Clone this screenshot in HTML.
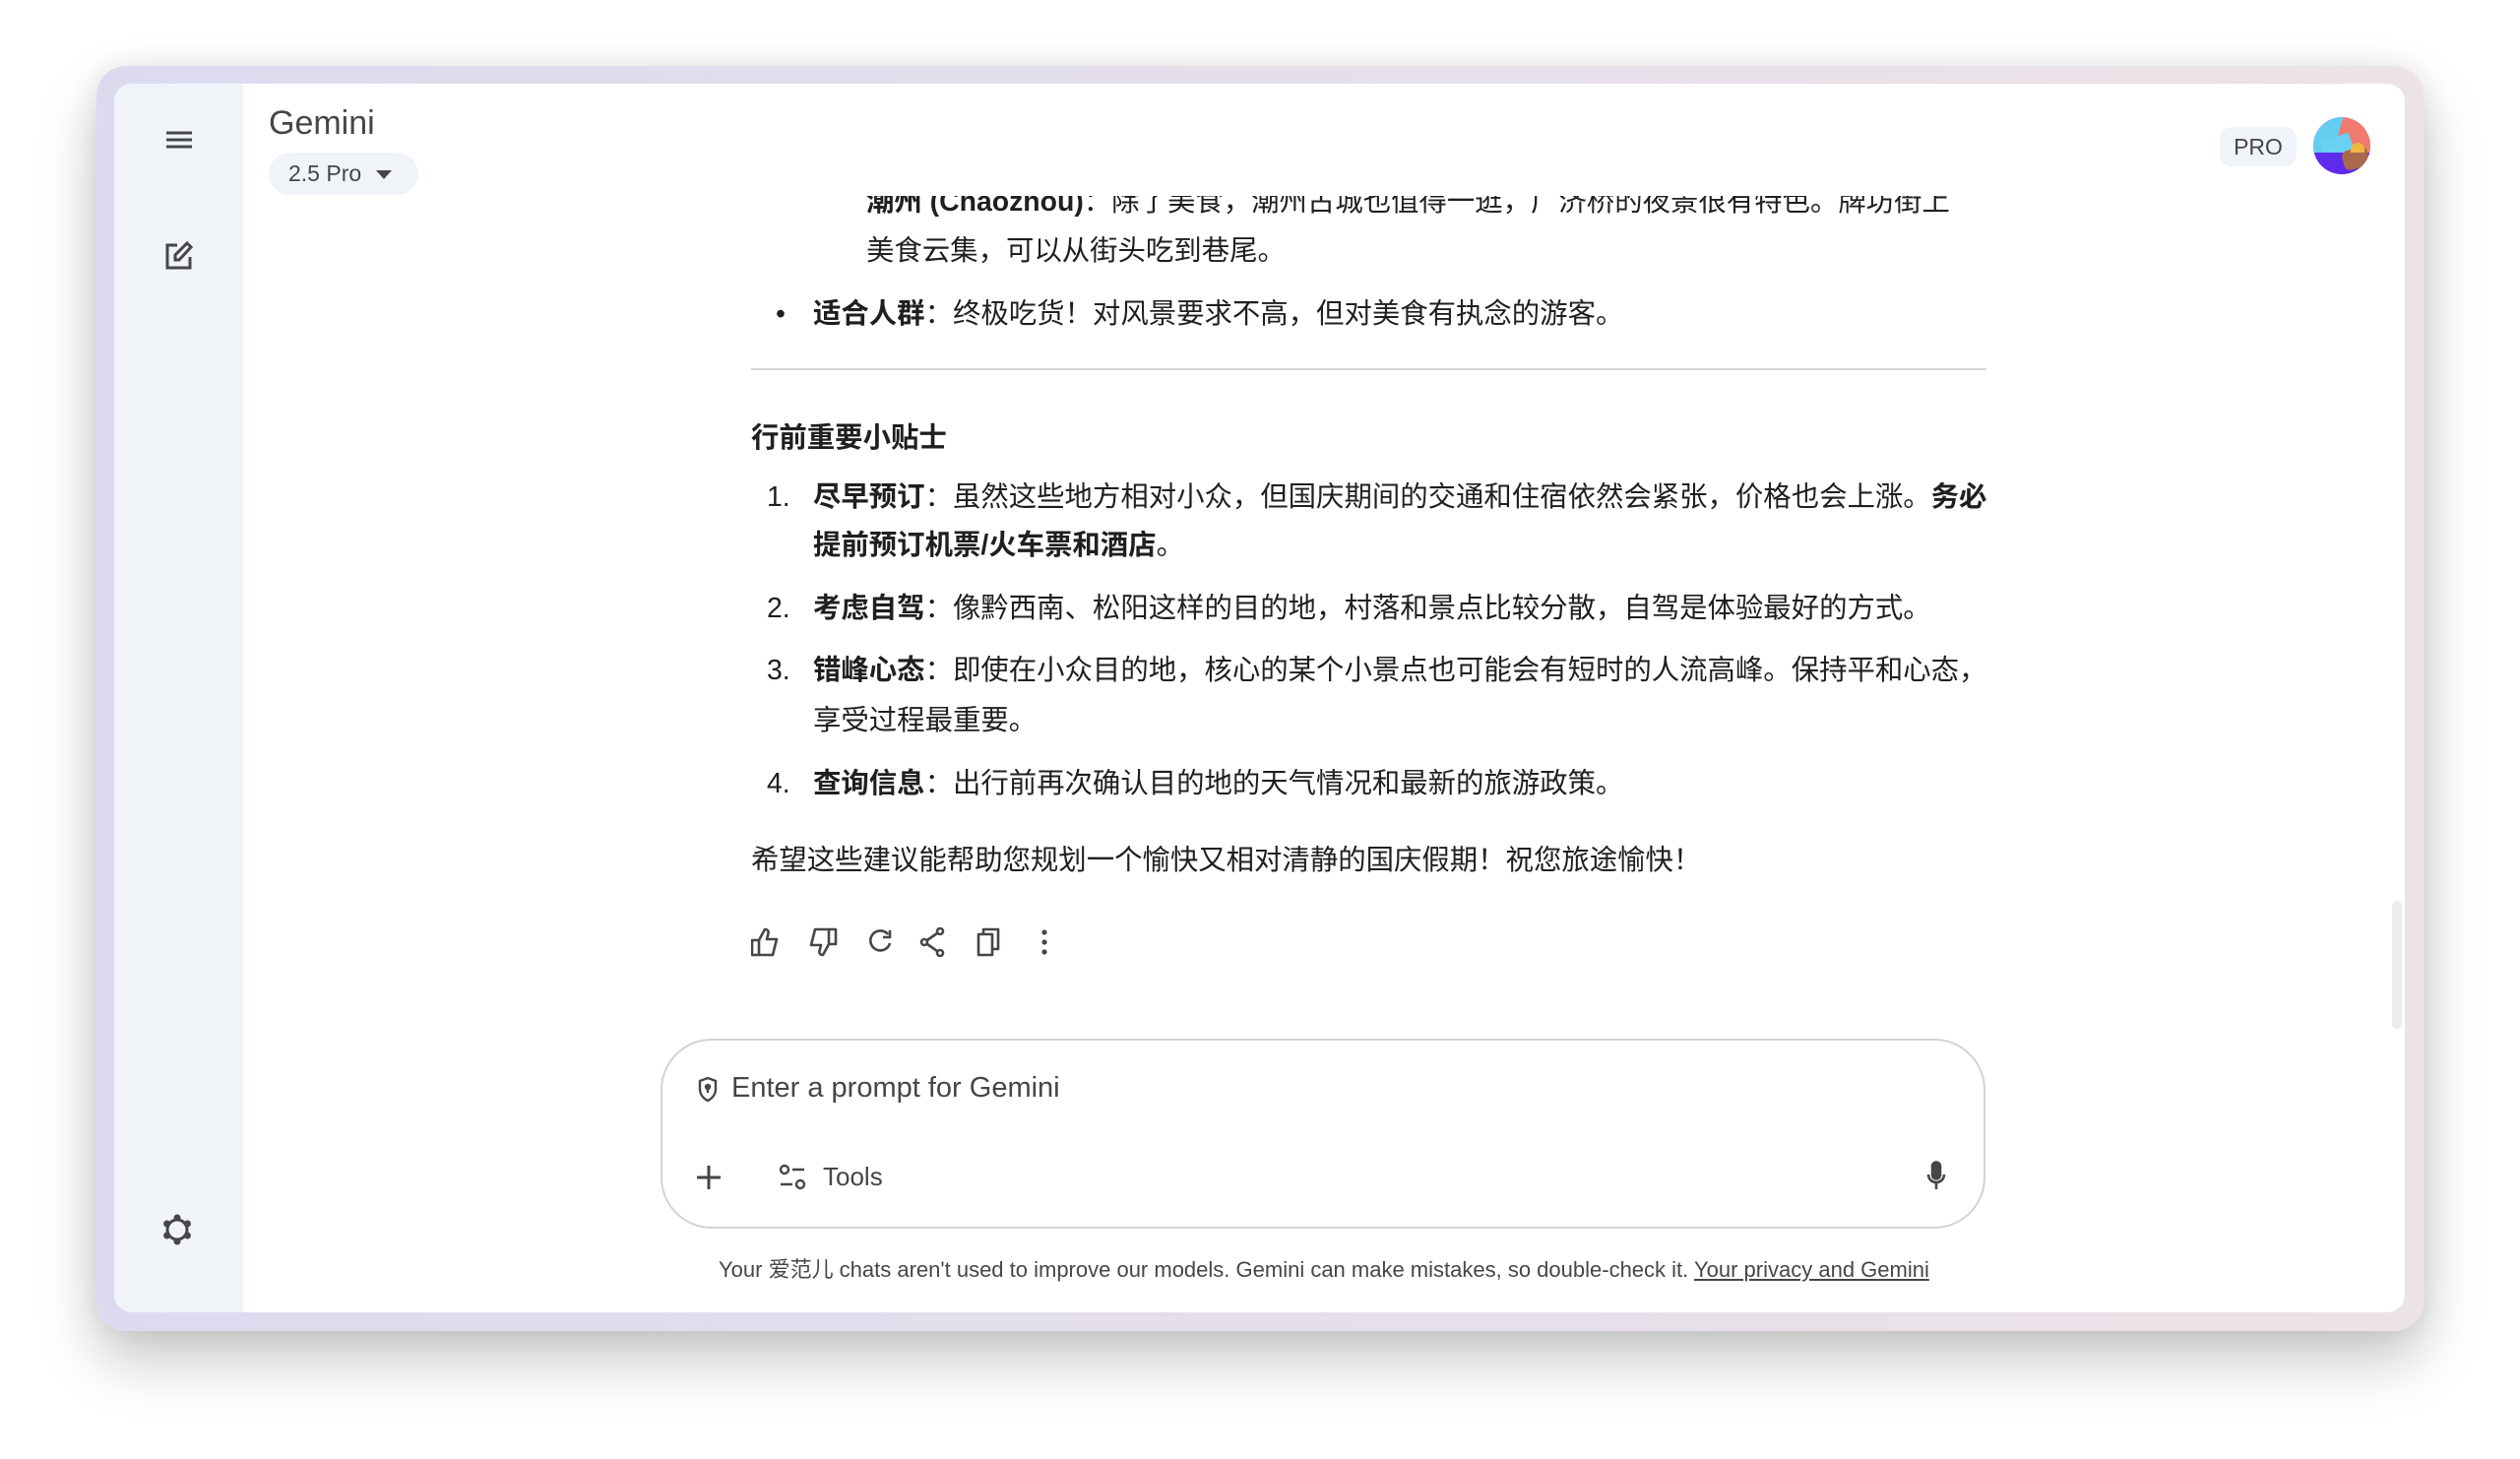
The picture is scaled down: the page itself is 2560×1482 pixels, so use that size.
<!DOCTYPE html>
<html><head><meta charset="utf-8">
<style>
*{margin:0;padding:0;box-sizing:border-box}
html,body{width:2560px;height:1482px;overflow:hidden;background:#fff;font-family:"Liberation Sans","Noto Sans CJK SC",sans-serif;color:#1f1f1f}
.outer{position:absolute;left:98px;top:67px;width:2364px;height:1285px;border-radius:30px;background:linear-gradient(90deg,#dddaf0,#e6e0ea 60%,#ece3e6);box-shadow:0 30px 60px rgba(0,0,0,.22),0 0 30px rgba(0,0,0,.08)}
.inner{position:absolute;left:116px;top:85px;width:2327px;height:1248px;border-radius:18px;background:#fff;overflow:hidden}
.side{position:absolute;left:0;top:0;width:131px;height:100%;background:#f0f4f9}
.a{position:absolute}
.t{position:absolute;font-size:28.4px;line-height:49px;white-space:nowrap;font-family:"Liberation Sans","Noto Sans CJK SC",sans-serif}
b{font-weight:700}
.clip{position:absolute;left:0;top:114px;width:2327px;height:1000px;overflow:hidden}
</style></head><body>
<div class="outer"></div>
<div class="inner">
 <div class="side">
  <svg class="a" style="left:52px;top:48px" width="28" height="18" viewBox="0 0 28 18"><path d="M1 2h26M1 9h26M1 16h26" stroke="#444746" stroke-width="3"/></svg>
  <svg class="a" style="left:51px;top:160px" width="30" height="30" viewBox="0 0 30 30" fill="none" stroke="#444746" stroke-width="3"><path d="M13 4H3v23h23V16"/><path d="M11 19v-5L23 2l4 4-12 13z"/></svg>
  <svg class="a" style="left:48px;top:1148px" width="32" height="32" viewBox="0 0 32 32" fill="none" stroke="#444746" stroke-width="3"><circle cx="16" cy="16" r="10"/><circle cx="16" cy="4" r="2" fill="#444746"/><circle cx="16" cy="28" r="2" fill="#444746"/><circle cx="5.6" cy="10" r="2" fill="#444746"/><circle cx="26.4" cy="10" r="2" fill="#444746"/><circle cx="5.6" cy="22" r="2" fill="#444746"/><circle cx="26.4" cy="22" r="2" fill="#444746"/></svg>
 </div>

 <div class="clip">
  <div class="t" style="left:764px;top:-18px"><b>潮州 (Chaozhou)</b>：除了美食，潮州古城也值得一逛，广济桥的夜景很有特色。牌坊街上</div>
  <div class="t" style="left:764px;top:32px">美食云集，可以从街头吃到巷尾。</div>
  <div class="t" style="left:672px;top:96px">•</div>
  <div class="t" style="left:710px;top:96px"><b>适合人群</b>：终极吃货！对风景要求不高，但对美食有执念的游客。</div>
  <div class="a" style="left:647px;top:175px;width:1255px;height:2px;background:#d3d3d3"></div>
  <div class="t" style="left:647px;top:222px"><b>行前重要小贴士</b></div>
  <div class="t" style="left:663px;top:282px">1.</div>
  <div class="t" style="left:710px;top:282px"><b>尽早预订</b>：虽然这些地方相对小众，但国庆期间的交通和住宿依然会紧张，价格也会上涨。<b>务必</b></div>
  <div class="t" style="left:710px;top:331px"><b>提前预订机票/火车票和酒店</b>。</div>
  <div class="t" style="left:663px;top:395px">2.</div>
  <div class="t" style="left:710px;top:395px"><b>考虑自驾</b>：像黔西南、松阳这样的目的地，村落和景点比较分散，自驾是体验最好的方式。</div>
  <div class="t" style="left:663px;top:458px">3.</div>
  <div class="t" style="left:710px;top:458px"><b>错峰心态</b>：即使在小众目的地，核心的某个小景点也可能会有短时的人流高峰。保持平和心态，</div>
  <div class="t" style="left:710px;top:509px">享受过程最重要。</div>
  <div class="t" style="left:663px;top:573px">4.</div>
  <div class="t" style="left:710px;top:573px"><b>查询信息</b>：出行前再次确认目的地的天气情况和最新的旅游政策。</div>
  <div class="t" style="left:647px;top:651px">希望这些建议能帮助您规划一个愉快又相对清静的国庆假期！祝您旅途愉快！</div>
  <svg class="a" style="left:647px;top:743px" width="310" height="30" viewBox="0 0 310 30" fill="none" stroke="#444746" stroke-width="2.6" stroke-linejoin="round">
   <path d="M1 13h7v15H1zM8 13l6-11c3 0 4 2 3.5 4L16 12h10l-4 16H8"/>
   <path d="M86 17h-7V2h7zM79 17l-6 11c-3 0-4-2-3.5-4L71 18H61l4-16h14"/>
   <path d="M139 7a10 10 0 1 0 2 9M141 3v7h-7"/>
   <circle cx="192" cy="4" r="3"/><circle cx="192" cy="26" r="3"/><circle cx="176" cy="15" r="3"/><path d="M189 6l-10 7M189 24l-10-7"/>
   <path d="M236 6v-4h15v20h-6M231 7h14v21h-14z"/>
  </svg>
  <svg class="a" style="left:940px;top:743px" width="10" height="30" viewBox="0 0 10 30"><circle cx="5" cy="5" r="2.6" fill="#444746"/><circle cx="5" cy="15" r="2.6" fill="#444746"/><circle cx="5" cy="25" r="2.6" fill="#444746"/></svg>
 </div>

 <div class="a" style="left:157px;top:21px;font-size:34px;color:#444746">Gemini</div>
 <div class="a" style="left:157px;top:70px;width:152px;height:43px;border-radius:22px;background:#f0f4f9;font-size:23px;line-height:43px;color:#444746;padding-left:20px">2.5 Pro <span style="display:inline-block;margin-left:8px;width:0;height:0;border-left:8px solid transparent;border-right:8px solid transparent;border-top:9px solid #444746;vertical-align:middle"></span></div>
 <div class="a" style="left:2139px;top:44px;width:78px;height:40px;border-radius:12px;background:#f0f4f9;font-size:23px;line-height:40px;text-align:center;color:#444746">PRO</div>
 <div class="a" style="left:2234px;top:34px;width:58px;height:58px;border-radius:50%;overflow:hidden;background:#ef7b6e">
  <div class="a" style="left:-5px;top:0;width:30px;height:40px;background:#63cdf0;transform:skewX(-15deg)"></div>
  <div class="a" style="left:10px;top:20px;width:30px;height:22px;background:#6ad0f5;transform:rotate(-20deg)"></div>
  <div class="a" style="left:0;top:36px;width:58px;height:22px;background:#5e2bea"></div>
  <div class="a" style="left:30px;top:32px;width:26px;height:20px;background:#a86a4a;border-radius:6px;transform:rotate(-15deg)"></div>
  <div class="a" style="left:38px;top:26px;width:14px;height:10px;background:#f1b640;border-radius:7px 7px 0 0"></div>
 </div>

 <div class="a" style="left:555px;top:970px;width:1346px;height:193px;border:2px solid #d3d3d3;border-radius:52px;background:#fff"></div>
 <svg class="a" style="left:592px;top:1008px" width="22" height="28" viewBox="0 0 22 28" fill="none" stroke="#444746" stroke-width="2.4"><path d="M11 2l8 3v8c0 6-4 10-8 12-4-2-8-6-8-12V5z"/><circle cx="11" cy="11" r="2" fill="#444746"/><path d="M11 12v5"/></svg>
 <div class="a" style="left:627px;top:1002px;font-size:29px;line-height:36px;color:#444746">Enter a prompt for Gemini</div>
 <svg class="a" style="left:591px;top:1098px" width="26" height="26" viewBox="0 0 26 26"><path d="M13 1v24M1 13h24" stroke="#444746" stroke-width="3"/></svg>
 <svg class="a" style="left:675px;top:1097px" width="28" height="28" viewBox="0 0 28 28" fill="none" stroke="#444746" stroke-width="2.4"><circle cx="6" cy="6" r="4"/><path d="M14 6h12M2 21h12"/><circle cx="22" cy="21" r="4"/></svg>
 <div class="a" style="left:720px;top:1092px;font-size:26px;line-height:36px;color:#444746">Tools</div>
 <svg class="a" style="left:1840px;top:1094px" width="22" height="32" viewBox="0 0 22 32" fill="none" stroke="#444746" stroke-width="2.6"><rect x="7" y="1.5" width="8" height="17" rx="4" fill="#444746"/><path d="M3 14c0 5 4 8 8 8s8-3 8-8M11 22v7"/></svg>
 <div class="a" style="left:614px;top:1191px;font-size:22px;line-height:28px;color:#444746;white-space:nowrap">Your 爱范儿 chats aren't used to improve our models. Gemini can make mistakes, so double-check it. <span style="text-decoration:underline">Your privacy and Gemini</span></div>
 <div class="a" style="left:2314px;top:830px;width:10px;height:130px;border-radius:5px;background:#ececec"></div>
</div>
</body></html>
